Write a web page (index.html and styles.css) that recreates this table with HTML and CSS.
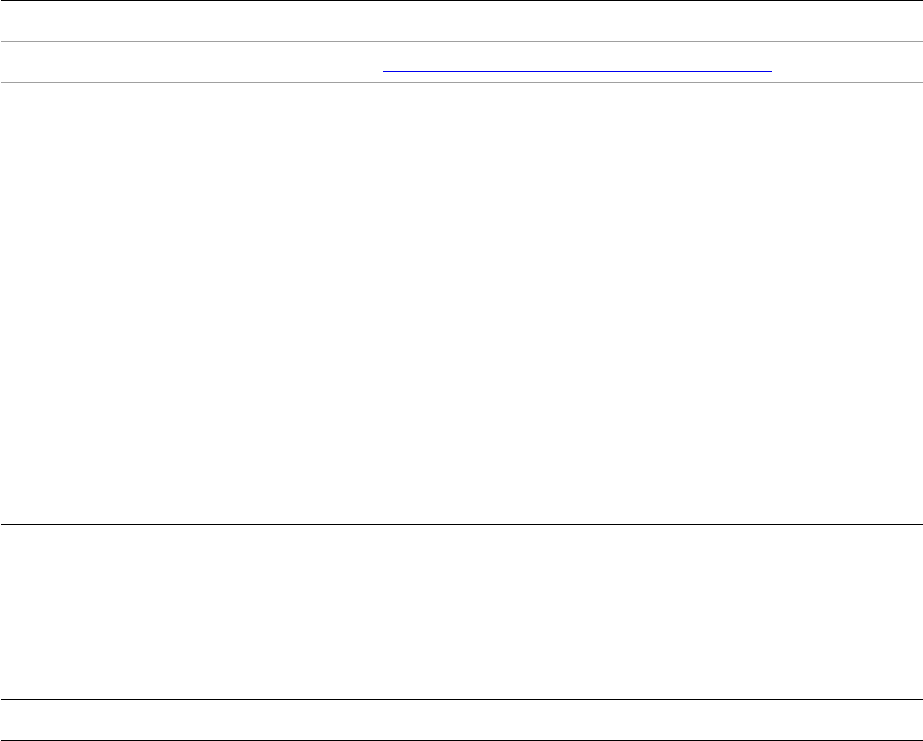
FILE: index.html
```html
<!DOCTYPE html>
<html lang="en">
<head>
  <meta charset="UTF-8">
  <meta name="viewport" content="width=device-width, initial-scale=1.0">
  <title>Page</title>
  <link rel="stylesheet" href="styles.css">
</head>
<body>
  <div class="page">
    <header class="top"></header>
    <nav class="nav">
      <span class="nav-link"></span>
    </nav>
    <main class="main"></main>
    <section class="footer"></section>
    <footer class="bottom"></footer>
  </div>
</body>
</html>
```
FILE: styles.css
```css
body {
  margin: 0;
  font-family: "Liberation Sans", Arial, sans-serif;
  background-color: #fff;
}
.page {
  display: flex;
  flex-direction: column;
  padding-left: 1px;
}
.top {
  border-top: 1px solid #000;
  height: 40px;
}
.nav {
  display: flex;
  align-items: flex-start;
  height: 40px;
  padding-left: 382px;
  border-top: 1px solid #a0a0a0;
  border-bottom: 1px solid #a0a0a0;
}
.nav-link {
  display: block;
  width: 389px;
  height: 29px;
  border-bottom: 1px solid #0000ee;
}
.main {
  height: 441px;
}
.footer {
  border-top: 1px solid #000;
  height: 174px;
}
.bottom {
  border-top: 1px solid #000;
  border-bottom: 1px solid #000;
  height: 40px;
}
```
